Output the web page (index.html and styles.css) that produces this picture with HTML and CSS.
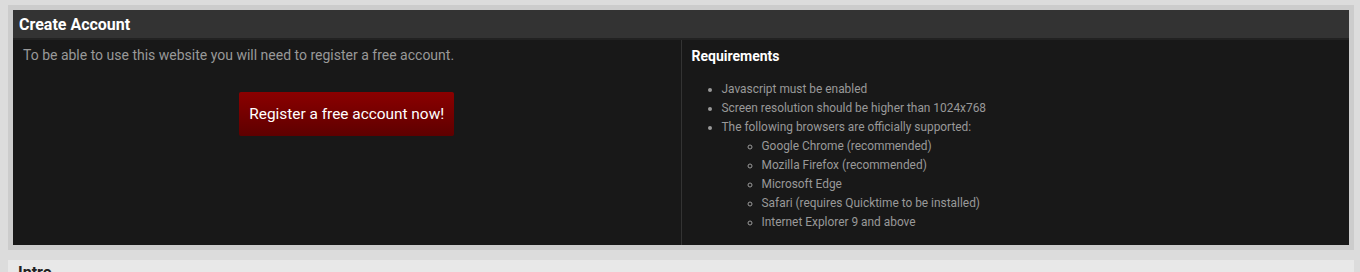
FILE: index.html
```html
<!DOCTYPE html>
<html lang="en">
<head>
    <meta charset="UTF-8">
    <meta name="viewport" content="width=device-width, initial-scale=1.0">
    <title>Create Account</title>
    <link rel="stylesheet" href="styles.css">
</head>
<body>
    <div class="panel">
        <div class="panel-head">Create Account</div>
        <div class="panel-body">
            <div class="col">
                <p class="intro-text">To be able to use this website you will need to register a free account.</p>
                <div class="btn-wrap">
                    <a href="#" class="btn">Register a free account now!</a>
                </div>
            </div>
            <div class="col col-right">
                <h3>Requirements</h3>
                <ul class="req">
                    <li>Javascript must be enabled</li>
                    <li>Screen resolution should be higher than 1024x768</li>
                    <li>The following browsers are officially supported:
                        <ul>
                            <li>Google Chrome (recommended)</li>
                            <li>Mozilla Firefox (recommended)</li>
                            <li>Microsoft Edge</li>
                            <li>Safari (requires Quicktime to be installed)</li>
                            <li>Internet Explorer 9 and above</li>
                        </ul>
                    </li>
                </ul>
            </div>
        </div>
    </div>

    <div class="panel panel-light">
        <div class="panel-head">Intro</div>
    </div>
</body>
</html>
```

FILE: styles.css
```css
* { margin: 0; padding: 0; box-sizing: border-box; }
body { font-family: Roboto, Arial, sans-serif; background: #dcdcdc; padding: 5px 6px 0 8px; }
.panel { border: 5px solid #cccccc; background: #181818; margin-bottom: 10px; }
.panel-head { background: #333333; color: #ffffff; font-size: 16px; font-weight: bold; height: 30px; line-height: 29px; padding-left: 6px; border-bottom: 2px solid #222222; }
.panel-body { display: flex; }
.col { flex: 1; padding: 5px 10px 13px 10px; }
.col-right { border-left: 1px solid #333333; }
.intro-text { color: #999999; font-size: 14px; line-height: 20px; }
.btn-wrap { text-align: center; margin-top: 27px; }
.btn { display: inline-block; padding: 12px 10px; line-height: 20px; font-size: 15.4px; color: #ffffff; text-decoration: none; background: linear-gradient(#8b0000, #5e0000); border-radius: 2px; }
h3 { color: #ffffff; font-size: 14px; font-weight: bold; line-height: 20px; margin-top: 1px; }
.req { color: #999999; font-size: 11.9px; line-height: 19px; padding-left: 30px; margin-top: 14px; }
.req ul { list-style: circle; padding-left: 40px; }
.panel-light { background: #e8e8e8; border: none; }
.panel-light .panel-head { background: #e8e8e8; color: #222222; border: none; padding-left: 10px; line-height: 26px; }
```
